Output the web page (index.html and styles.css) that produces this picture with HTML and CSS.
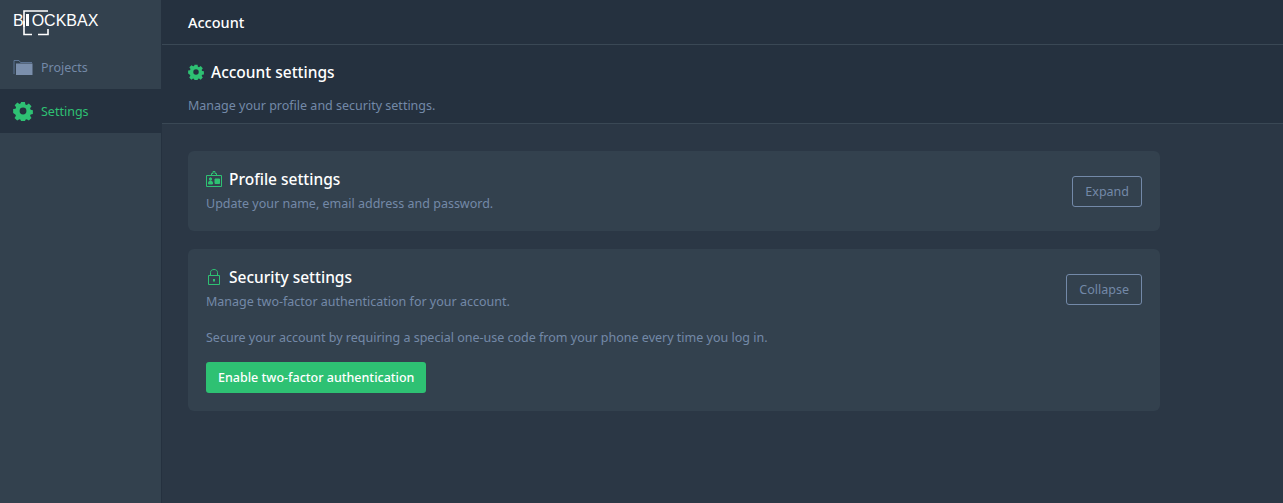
FILE: index.html
```html
<!DOCTYPE html>
<html lang="en">
<head>
    <meta charset="UTF-8">
    <meta name="viewport" content="width=device-width, initial-scale=1.0">
    <title>Account</title>
    <link rel="stylesheet" href="styles.css">
</head>
<body>
    <div class="app">
        <aside class="sidebar">
            <div class="logo">
                <span class="logo-text">B<span class="logo-l"></span>OCKBAX</span>
                <svg class="logo-frame" width="28" height="26" viewBox="0 0 28 26" fill="none" stroke="#fff" stroke-width="1.6">
                    <path d="M1 17V1H25"/>
                    <path d="M1 11V24.500H9M15 24.500H25V19" />
                </svg>
            </div>
            <a class="nav-item">
                <svg class="nav-icon" width="20" height="17" viewBox="0 0 20 17">
                    <path d="M1 15V1.500H6L7.500 3.500H19" fill="none" stroke="#5d7493" stroke-width="1"/>
                    <path d="M3 16V4.500H19.500V16Z" fill="#7b8fac"/>
                </svg>
                <span>Projects</span>
            </a>
            <a class="nav-item active">
                <svg class="nav-icon" width="20" height="20" viewBox="0 0 24 24">
                    <use href="#gear"/>
                </svg>
                <span>Settings</span>
            </a>
        </aside>
        <main class="main">
            <header class="topbar">Account</header>
            <section class="page-head">
                <h1>
                    <svg width="16" height="16" viewBox="0 0 24 24"><use href="#gear"/></svg>
                    Account settings
                </h1>
                <p>Manage your profile and security settings.</p>
            </section>
            <div class="content">
                <section class="card">
                    <div class="card-head">
                        <div>
                            <h2>
                                <svg width="16" height="16" viewBox="0 0 16 16" fill="none" stroke="#2ec173">
                                    <path d="M.5 4.500H15.500V15.500H.5Z"/>
                                    <path d="M5.500 4.500V2.500H7V.5H9V2.500H10.500V4.500"/>
                                    <path d="M2.500 13V11.500L3.500 10H5.500L6.500 11.500V13Z" fill="#2ec173"/>
                                    <circle cx="4.500" cy="8" r="1.200" fill="#2ec173"/>
                                    <path d="M9 8H13.500V12.500H9Z" fill="#2ec173"/>
                                </svg>
                                Profile settings
                            </h2>
                            <p>Update your name, email address and password.</p>
                        </div>
                        <button class="btn-outline">Expand</button>
                    </div>
                </section>
                <section class="card">
                    <div class="card-head">
                        <div>
                            <h2>
                                <svg width="16" height="16" viewBox="0 0 16 16" fill="none" stroke="#2ec173">
                                    <path d="M2.500 6.500H13.500V15.500H2.500Z"/>
                                    <path d="M4.500 6.500V3.500C4.500 1.500 6 .5 8 .5S11.500 1.500 11.500 3.500V6.500"/>
                                    <path d="M8 10V12.500" stroke-width="2"/>
                                </svg>
                                Security settings
                            </h2>
                            <p>Manage two-factor authentication for your account.</p>
                        </div>
                        <button class="btn-outline">Collapse</button>
                    </div>
                    <p class="card-text">Secure your account by requiring a special one-use code from your phone every time you log in.</p>
                    <button class="btn-primary">Enable two-factor authentication</button>
                </section>
            </div>
        </main>
    </div>

    <svg width="0" height="0" class="defs">
        <symbol id="gear" viewBox="0 0 24 24">
            <path fill="#2ec173" fill-rule="evenodd" d="M9.500 0h5l.6 3.300 1.800.8 2.800-1.900 3.500 3.500-1.900 2.800.8 1.800 2.900.6v5l-2.900.6-.8 1.800 1.900 2.800-3.500 3.500-2.800-1.900-1.800.8-.6 3h-5l-.6-3-1.800-.8-2.800 1.900-3.500-3.500 1.900-2.800-.8-1.800L-1 14.500v-5l3.100-.6.8-1.800L1 4.300l3.500-3.500 2.800 1.900 1.600-.8zM12 7.500a4.500 4.500 0 1 0 0 9 4.500 4.500 0 0 0 0-9z" transform="translate(1.100 1.100) scale(.91)"/>
        </symbol>
    </svg>
</body>
</html>
```

FILE: styles.css
```css
* {
    box-sizing: border-box;
}
body {
    margin: 0;
    height: 503px;
    overflow: hidden;
    background-color: #2b3745;
    font-family: "Noto Sans", Arial, sans-serif;
    font-size: 12.5px;
    color: #7389a8;
}
.defs {
    position: absolute;
}
.app {
    display: flex;
    height: 100%;
}
.sidebar {
    width: 162px;
    flex-shrink: 0;
    background-color: #33414e;
    border-right: 1px solid #25313f;
}
.logo {
    position: relative;
    height: 45px;
    padding: 11px 0 0 13px;
}
.logo-text {
    display: block;
    font-family: "Liberation Sans", Arial, sans-serif;
    font-size: 16px;
    line-height: 20px;
    color: #fff;
}
.logo-l {
    display: inline-block;
    width: 3px;
    height: 12px;
    margin: 0 3px 0 2px;
    background-color: #fff;
}
.logo-frame {
    position: absolute;
    left: 23px;
    top: 10px;
}
.nav-item {
    display: flex;
    align-items: center;
    height: 44px;
    padding-left: 13px;
    gap: 8px;
}
.nav-item.active {
    background-color: #25313f;
    color: #2ec173;
}
.nav-icon {
    flex-shrink: 0;
}
.main {
    flex: 1;
    min-width: 0;
}
.topbar {
    height: 45px;
    padding: 13px 0 0 26px;
    background-color: #25313f;
    border-bottom: 1px solid #3a4855;
    font-size: 14.5px;
    font-weight: 500;
    line-height: 19px;
    color: #fff;
}
.page-head {
    height: 79px;
    padding: 16px 0 0 26px;
    background-color: #25313f;
    border-bottom: 1px solid #3a4855;
}
.page-head h1 {
    display: flex;
    align-items: center;
    gap: 7px;
    margin: 0 0 14px;
    font-size: 15.500px;
    font-weight: 500;
    line-height: 22px;
    color: #fff;
}
.page-head p {
    margin: 0;
    line-height: 18px;
}
.content {
    display: flex;
    flex-direction: column;
    gap: 18px;
    width: 972px;
    margin: 27px 0 0 26px;
}
.card {
    padding: 18px;
    background-color: #33414e;
    border-radius: 6px;
}
.card-head {
    display: flex;
    justify-content: space-between;
    align-items: center;
}
.card h2 {
    display: flex;
    align-items: center;
    gap: 7px;
    margin: 0 0 6px;
    font-size: 15.500px;
    font-weight: 500;
    line-height: 20px;
    color: #fff;
}
.card p {
    margin: 0;
    line-height: 18px;
}
.card .card-text {
    margin: 18px 0 15px;
}
.btn-outline {
    height: 31px;
    padding: 0 12px;
    background: none;
    border: 1px solid #7389a8;
    border-radius: 3px;
    font: inherit;
    color: #7389a8;
    cursor: pointer;
}
.btn-primary {
    display: block;
    height: 31px;
    padding: 0 12px;
    background-color: #2ec173;
    border: none;
    border-radius: 3px;
    font: inherit;
    font-weight: 500;
    color: #fff;
    cursor: pointer;
}
```
